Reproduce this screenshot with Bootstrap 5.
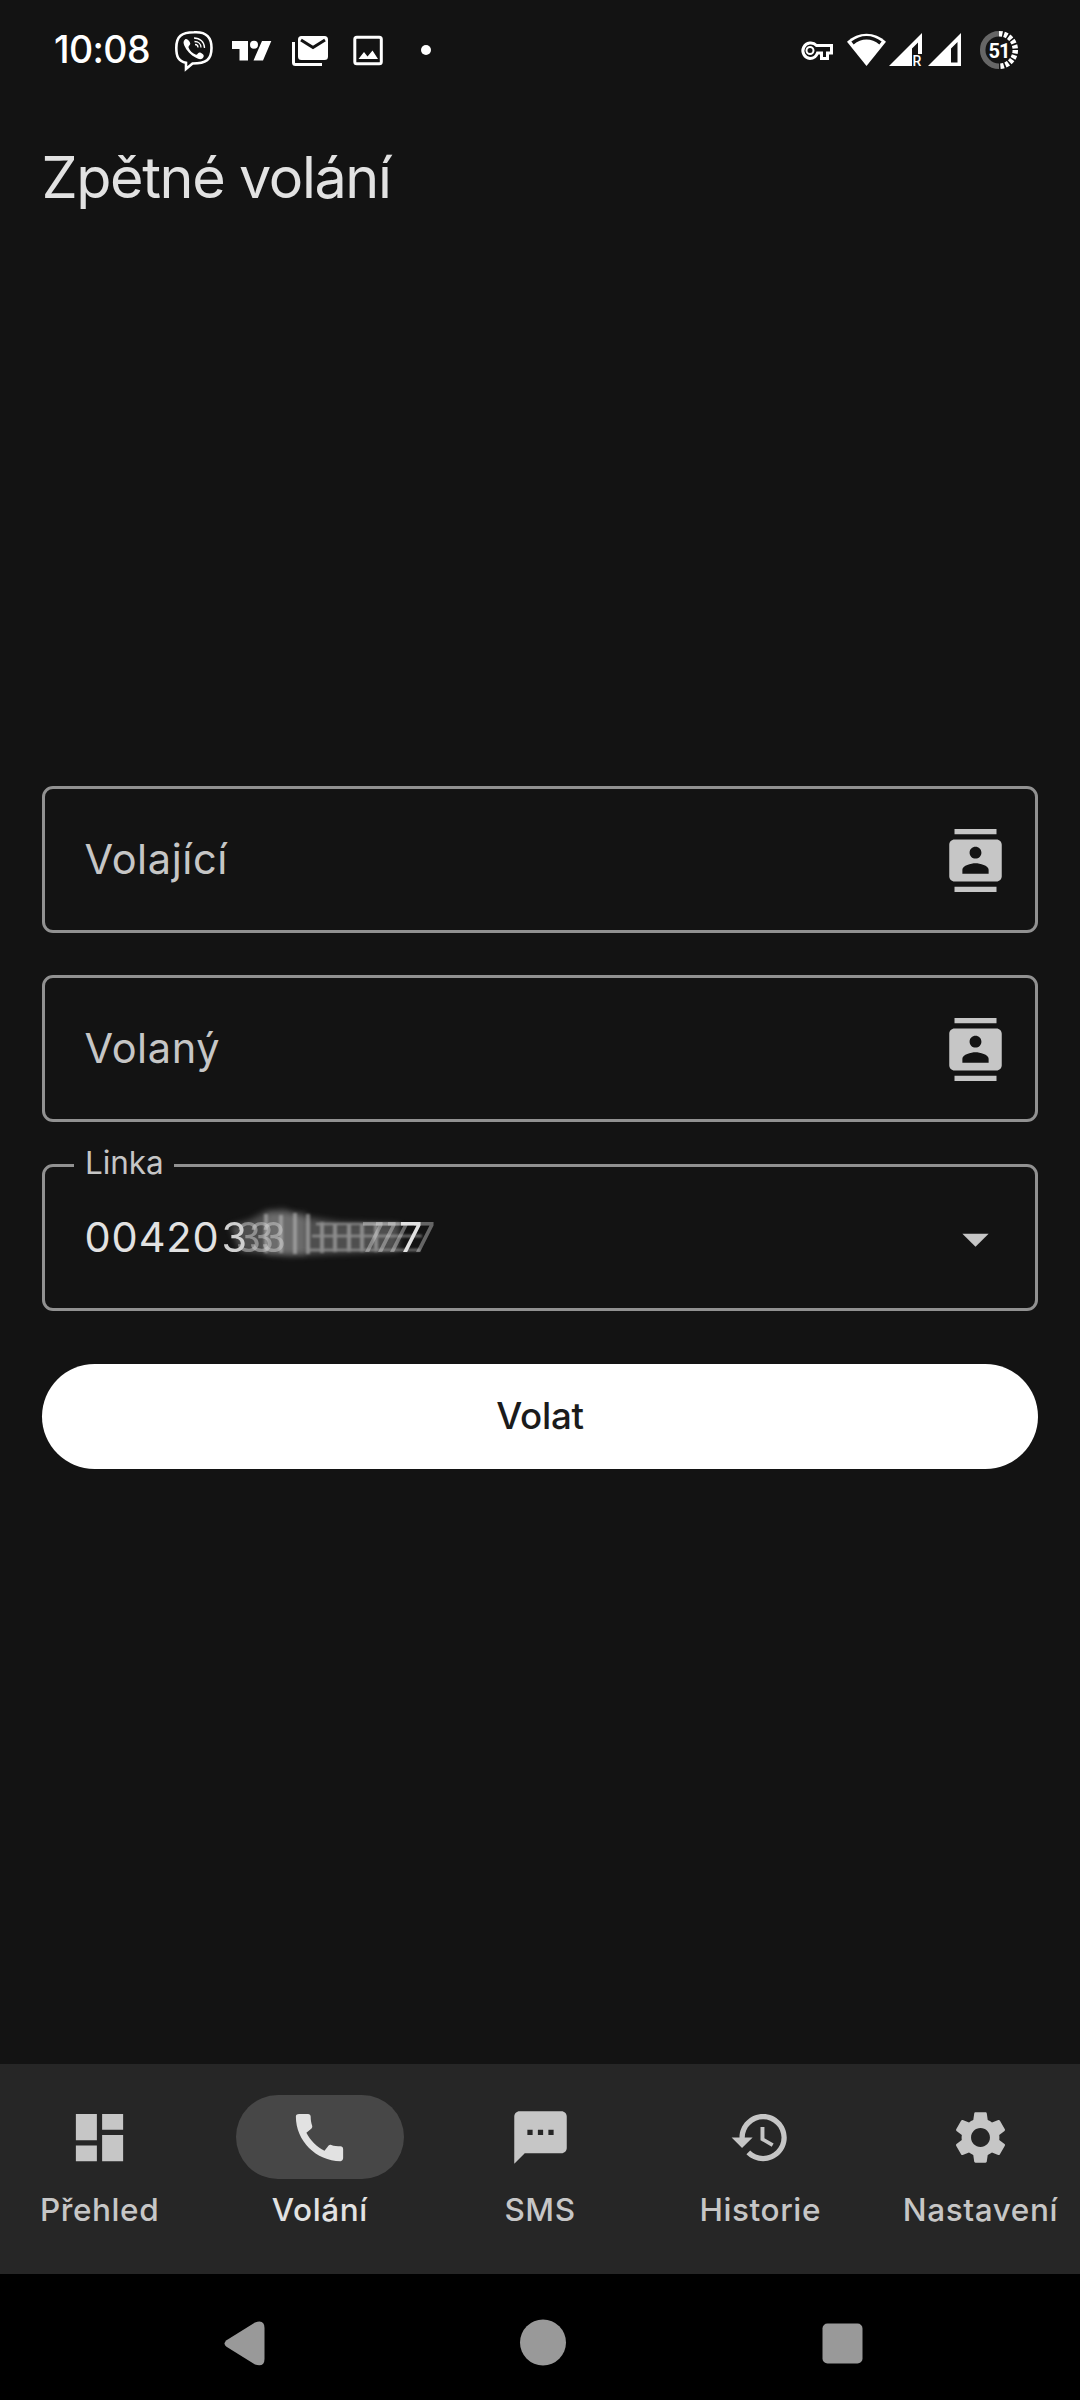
<!DOCTYPE html>
<html lang="cs" data-bs-theme="dark">
<head>
<meta charset="utf-8">
<meta name="viewport" content="width=device-width, initial-scale=1">
<title>Zpětné volání</title>
<link href="https://cdn.jsdelivr.net/npm/bootstrap@5.3.0/dist/css/bootstrap.min.css" rel="stylesheet">
<style>
  body{background:#131313;font-family:Inter,"Noto Sans",sans-serif;color:#e2e2e2;width:1080px;height:2400px;overflow:hidden}
  svg{display:block;flex:none}
  .statusbar{height:100px;padding-left:54px;color:#fff}
  .clock{font-size:37.5px;font-weight:500;line-height:1;letter-spacing:-.6px;width:111px;white-space:nowrap}
  .page-title{font-size:57.5px;font-weight:400;line-height:70px;margin:42px 0 0 41.500px;letter-spacing:-1.4px;white-space:nowrap;color:#e2e2e2}
  .title-area{height:686px}
  .form-area{padding:0 42px}
  .outlined{height:147px;border:3px solid #919191;border-radius:11px;padding:0 28px 0 39.500px;font-size:41.5px;color:#c6c6c6;letter-spacing:.6px;line-height:1}
  .outlined.gap-below{margin-bottom:42px}
  .contact-icon{margin-top:2px}
  .float-label{left:29px;top:-26px;width:100px;padding-left:11px;background:#131313;font-size:31.5px;line-height:44px;letter-spacing:-.1px}
  .number{color:#e2e2e2;letter-spacing:.9px;width:131.500px;white-space:nowrap}
  .call-btn{--bs-btn-bg:#fff;--bs-btn-color:#1b1b1b;--bs-btn-hover-bg:#eee;height:105px;margin-top:53px;font-size:36.75px;font-weight:500;line-height:1;letter-spacing:-.3px}
  .tabs{height:210px;background:#262626;gap:21px;padding-top:31px}
  .tab-item{flex:1 1 0;min-width:0;color:#c6c6c6;font-size:31.5px;font-weight:500;line-height:42px;white-space:nowrap;letter-spacing:.6px}
  .tab-item.current{color:#e2e2e2}
  .pill{width:168px;height:84px}
  .current .pill{background:#474747}
  .tab-text{margin-top:10px}
  .sysnav{height:126px;background:#000}
</style>
</head>
<body class="d-flex flex-column">
<header class="statusbar d-flex align-items-center">
  <span class="clock">10:08</span>
  <svg width="300" height="60" viewBox="165 20 300 60" fill="none">
    <path d="M194 32.300C207 31.500 211.500 38 211.500 48C211.500 60 206 63.500 192.500 63.500L186 69V62.800C178.500 61 176.300 57 176.300 48C176.300 36 181.500 32.500 194 32.300Z" stroke="#fff" stroke-width="2.600"/>
    <path d="M185 39.500C187 38 189.500 41 190.300 43.500C190.500 45 188 46 188.500 47.500C190 51 192.500 53.500 196 54.800C197.500 55 198.300 52.300 200 52.600C202 53.400 204.500 55 203.500 57C202 60 199 59.500 196 57.800C190.500 55 186.500 50.500 184.300 45.500C183.400 43 183 41 185 39.500Z" fill="#fff"/>
    <path d="M194 38C200 38 204.500 42 204.500 48M194.500 41.500C198.500 41.500 201 44 201 47.500M195 44.500C197 44.500 198 45.500 198 47.500" stroke="#fff" stroke-width="1.300"/>
    <path d="M232 41h16v19.500h-8.500V49H232zM262 41h9.300L263 60.500h-9.500z" fill="#fff"/><circle cx="254" cy="44.700" r="4" fill="#fff"/>
    <path d="M301.500 36h23a3.500 3.500 0 0 1 3.500 3.500v17a3.500 3.500 0 0 1-3.500 3.500h-23a3.500 3.500 0 0 1-3.500-3.500v-17a3.500 3.500 0 0 1 3.500-3.500z" fill="#fff"/>
    <path d="M301 40l12 7.500 12-7.500" stroke="#131313" stroke-width="3"/><path d="M293.500 42v20.500a2 2 0 0 0 2 2H322" stroke="#fff" stroke-width="3"/>
    <rect x="354.800" y="37.200" width="26.500" height="26.500" rx="2" stroke="#fff" stroke-width="3"/>
    <path d="M358.500 59l5.500-7 3.500 4.500 5-6 5.500 8.500z" fill="#fff"/><circle cx="426" cy="50" r="5" fill="#fff"/>
  </svg>
  <svg class="ms-auto" width="280" height="60" viewBox="800 20 280 60" fill="none">
    <path d="M816.500 45.500H831.500V53H827.500V58.500H821.500V53H817.500C816 57 813.500 58.500 810 58.500A7.800 7.800 0 1 1 816.500 45.500Z" stroke="#fff" stroke-width="3"/><circle cx="810" cy="50.500" r="3.500" stroke="#fff" stroke-width="2"/>
    <path d="M866.500 66L847 41.800C858 31 875 31 886 41.800Z" fill="#fff"/><path d="M852.500 43C861 36 872 36 880.500 43" stroke="#131313" stroke-width="3.600"/>
    <path d="M889 66L922 33V54H918V42.500L912 48.500V66Z" fill="#fff"/><text x="912.500" y="66" font-family="Roboto" font-size="14" font-weight="500" fill="#fff">R</text>
    <path fill-rule="evenodd" d="M928 66L961 33V66ZM951 48.500V62.500H957.500V42Z" fill="#fff"/>
    <path d="M999 33.700A16.300 16.300 0 0 0 999 66.300" stroke="#666" stroke-width="5.500"/><path d="M999 33.700A16.300 16.300 0 0 1 999 66.300" stroke="#fff" stroke-width="5.500" stroke-dasharray="3.500 1.600"/>
    <text x="999" y="58" text-anchor="middle" font-family="Roboto" font-size="20" font-weight="700" fill="#fff" letter-spacing="-1">51</text>
  </svg>
</header>
<div class="title-area"><h1 class="page-title">Zpětné volání</h1></div>
<main class="form-area flex-grow-1">
  <div class="outlined gap-below d-flex align-items-center justify-content-between"><span>Volající</span>
    <svg class="contact-icon" width="63" height="63" viewBox="0 0 24 24" fill="#c6c6c6"><path d="M20 0H4v2h16V0zM4 24h16v-2H4v2zM20 4H4c-1.100 0-2 .9-2 2v12c0 1.100.9 2 2 2h16c1.100 0 2-.9 2-2V6c0-1.100-.9-2-2-2zm-8 2.750c1.240 0 2.250 1.010 2.250 2.250s-1.010 2.250-2.250 2.250S9.750 10.240 9.750 9 10.760 6.750 12 6.750zM17 17H7v-1.500c0-1.670 3.330-2.500 5-2.500s5 .83 5 2.500V17z"/></svg></div>
  <div class="outlined gap-below d-flex align-items-center justify-content-between"><span>Volaný</span>
    <svg class="contact-icon" width="63" height="63" viewBox="0 0 24 24" fill="#c6c6c6"><path d="M20 0H4v2h16V0zM4 24h16v-2H4v2zM20 4H4c-1.100 0-2 .9-2 2v12c0 1.100.9 2 2 2h16c1.100 0 2-.9 2-2V6c0-1.100-.9-2-2-2zm-8 2.750c1.240 0 2.250 1.010 2.250 2.250s-1.010 2.250-2.250 2.250S9.750 10.240 9.750 9 10.760 6.750 12 6.750zM17 17H7v-1.500c0-1.670 3.330-2.500 5-2.500s5 .83 5 2.500V17z"/></svg></div>
  <div class="outlined position-relative d-flex align-items-center"><span class="float-label position-absolute">Linka</span>
    <span class="number">00420</span>
    <svg width="230" height="80" viewBox="216 1198 230 80">
      <defs>
        <filter id="soft" x="-20%" y="-40%" width="140%" height="180%"><feGaussianBlur stdDeviation="3"/></filter>
        <filter id="streak" x="-20%" y="-20%" width="140%" height="140%"><feGaussianBlur stdDeviation="1.200"/></filter>
        <!-- trailing copies of the first hidden digit -->
        <filter id="trailRight" filterUnits="userSpaceOnUse" x="216" y="1198" width="230" height="80" color-interpolation-filters="sRGB">
          <feColorMatrix in="SourceGraphic" values="1 0 0 0 0 0 1 0 0 0 0 0 1 0 0 0 0 0 .5 0" result="dim"/>
          <feOffset in="dim" dx="6" result="a"/><feOffset in="dim" dx="14" result="b"/><feOffset in="dim" dx="27" result="c"/><feOffset in="dim" dx="39" result="d"/>
          <feMerge><feMergeNode in="b"/><feMergeNode in="c"/><feMergeNode in="d"/><feMergeNode in="SourceGraphic"/></feMerge>
        </filter>
        <!-- trailing copies of the last digit, on both sides -->
        <filter id="trailBoth" filterUnits="userSpaceOnUse" x="216" y="1198" width="230" height="80" color-interpolation-filters="sRGB">
          <feColorMatrix in="SourceGraphic" values="1 0 0 0 0 0 1 0 0 0 0 0 1 0 0 0 0 0 .4 0" result="dim"/>
          <feOffset in="dim" dx="13" result="a"/><feOffset in="dim" dx="-13" result="b"/><feOffset in="dim" dx="-25" result="c"/><feOffset in="dim" dx="-38" result="d"/>
          <feMerge><feMergeNode in="a"/><feMergeNode in="b"/><feMergeNode in="c"/><feMergeNode in="d"/><feMergeNode in="SourceGraphic"/></feMerge>
        </filter>
      </defs>
      <path filter="url(#soft)" fill="#8a8a8a" opacity=".5" d="M230 1226L250 1220L266 1211L284 1209L300 1216L340 1222L400 1224L398 1251L330 1254L290 1256L240 1251Z"/>
      <path filter="url(#soft)" fill="#999" opacity=".4" d="M266 1213H306V1254H266Z"/>
      <g filter="url(#streak)" stroke="#bdbdbd" stroke-width="4" opacity=".55" fill="none">
        <path d="M266 1214V1253M281 1215V1253M295 1213V1254M308 1214V1254M322 1222V1253M335 1223V1252M349 1223V1252M362 1223V1252M376 1223V1252"/>
        <path d="M316 1224H400M312 1236H422M310 1250H420" stroke-width="2.500"/>
      </g>
      <g font-family="Inter" font-size="41.500" fill="#e2e2e2">
        <text x="221.500" y="1252" filter="url(#trailRight)" fill="#d0d0d0">3</text>
        <text x="399" y="1252" filter="url(#trailBoth)">7</text>
      </g>
    </svg>
    <svg class="ms-auto mt-1" width="63" height="63" viewBox="0 0 24 24" fill="#c6c6c6"><path d="M7 9.800l5 5 5-5z"/></svg></div>
  <button class="btn call-btn rounded-pill w-100 border-0">Volat</button>
</main>
<nav class="tabs d-flex text-center">
  <div class="tab-item d-flex flex-column align-items-center"><div class="pill rounded-pill d-flex align-items-center justify-content-center"><svg width="63" height="63" viewBox="0 0 24 24" fill="#c6c6c6"><path d="M3 13h8V3H3v10zm0 8h8v-6H3v6zm10 0h8V11h-8v10zm0-18v6h8V3h-8z"/></svg></div><span class="tab-text">Přehled</span></div>
  <div class="tab-item current d-flex flex-column align-items-center"><div class="pill rounded-pill d-flex align-items-center justify-content-center"><svg width="63" height="63" viewBox="0 0 24 24" fill="#e2e2e2"><path d="M20.010 15.380c-1.230 0-2.420-.2-3.530-.56-.35-.12-.74-.03-1.010.24l-1.570 1.970c-2.830-1.350-5.480-3.900-6.890-6.830l1.950-1.660c.27-.28.35-.67.24-1.020-.37-1.110-.56-2.300-.56-3.530 0-.54-.45-.99-.99-.99H4.190C3.650 3 3 3.240 3 3.990 3 13.280 10.730 21 20.010 21c.71 0 .99-.63.99-1.180v-3.450c0-.54-.45-.99-.99-.99z"/></svg></div><span class="tab-text">Volání</span></div>
  <div class="tab-item d-flex flex-column align-items-center"><div class="pill rounded-pill d-flex align-items-center justify-content-center"><svg width="63" height="63" viewBox="0 0 24 24" fill="#c6c6c6"><path d="M20 2H4c-1.100 0-1.990.9-1.990 2L2 22l4-4h14c1.100 0 2-.9 2-2V4c0-1.100-.9-2-2-2zM9 11H7V9h2v2zm4 0h-2V9h2v2zm4 0h-2V9h2v2z"/></svg></div><span class="tab-text">SMS</span></div>
  <div class="tab-item d-flex flex-column align-items-center"><div class="pill rounded-pill d-flex align-items-center justify-content-center"><svg width="63" height="63" viewBox="0 0 24 24" fill="#c6c6c6"><path d="M13 3c-4.970 0-9 4.030-9 9H1l3.890 3.890.07.14L9 12H6c0-3.870 3.130-7 7-7s7 3.130 7 7-3.130 7-7 7c-1.930 0-3.680-.79-4.940-2.060l-1.420 1.420C8.270 19.990 10.510 21 13 21c4.970 0 9-4.030 9-9s-4.030-9-9-9zm-1 5v5l4.280 2.540.72-1.210-3.500-2.080V8H12z"/></svg></div><span class="tab-text">Historie</span></div>
  <div class="tab-item d-flex flex-column align-items-center"><div class="pill rounded-pill d-flex align-items-center justify-content-center"><svg width="63" height="63" viewBox="0 0 24 24" fill="#c6c6c6"><path d="M19.140 12.940c.04-.3.060-.61.060-.94 0-.32-.02-.64-.07-.94l2.030-1.580c.18-.14.230-.41.120-.61l-1.920-3.320c-.12-.22-.37-.29-.59-.22l-2.390.96c-.5-.38-1.030-.7-1.620-.94l-.36-2.540c-.04-.24-.24-.41-.48-.41h-3.840c-.24 0-.43.17-.47.41l-.36 2.540c-.59.24-1.130.57-1.620.94l-2.390-.96c-.22-.08-.47 0-.59.22L2.740 8.870c-.12.21-.08.47.12.61l2.030 1.580c-.05.3-.09.63-.09.94s.02.64.07.94l-2.030 1.580c-.18.14-.23.41-.12.61l1.920 3.320c.12.22.37.29.59.22l2.390-.96c.5.38 1.030.7 1.620.94l.36 2.540c.05.24.24.41.48.41h3.840c.24 0 .44-.17.470-.41l.36-2.540c.59-.24 1.130-.56 1.620-.94l2.390.96c.22.08.47 0 .59-.22l1.920-3.320c.12-.22.07-.47-.12-.61l-2.010-1.580zM12 15.600c-1.980 0-3.600-1.620-3.600-3.600s1.620-3.600 3.600-3.600 3.600 1.620 3.600 3.600-1.620 3.600-3.600 3.600z"/></svg></div><span class="tab-text">Nastavení</span></div>
</nav>
<footer class="sysnav"><svg width="1080" height="126" viewBox="0 2274 1080 126" fill="#999"><path d="M226.500 2340.200L255 2322.400Q264.500 2319 264.500 2328V2359Q264.500 2367.500 255 2364.600L226.500 2346.800Q222.500 2343.500 226.500 2340.200Z"/><circle cx="543" cy="2342.500" r="23"/><rect x="822.500" y="2323.500" width="40" height="40" rx="5"/></svg></footer>
<script src="https://cdn.jsdelivr.net/npm/bootstrap@5.3.0/dist/js/bootstrap.bundle.min.js"></script>
</body>
</html>
